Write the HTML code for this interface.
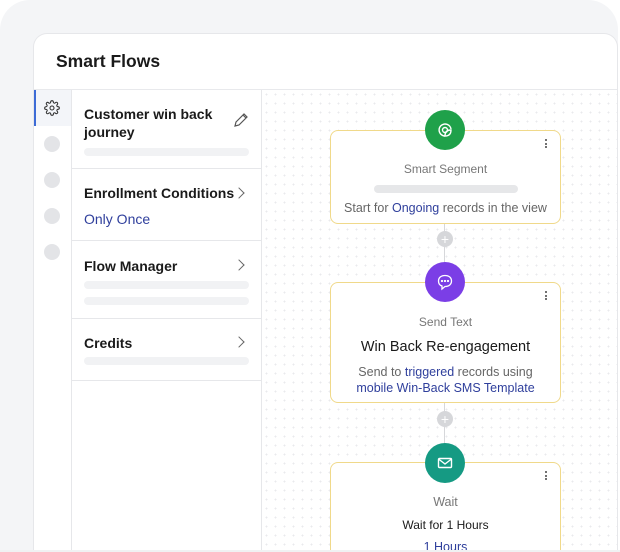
<!DOCTYPE html>
<html style="width:620px;height:552px;overflow:hidden"><head><meta charset="utf-8"><style>
*{margin:0;padding:0;box-sizing:border-box}
body{width:620px;height:552px;background:#fff;font-family:"Liberation Sans",sans-serif;position:relative;overflow:hidden}
.abs{position:absolute}
.bg{left:0;top:0;width:618px;height:552px;background:#f4f5f7;border-radius:30px 30px 0 0}
.card{left:33px;top:33px;width:585px;height:519px;background:#fff;border:1px solid #e6e7ea;border-bottom:none;border-radius:14px 14px 0 0;overflow:hidden}
.title{left:22px;top:17px;font-size:17.5px;font-weight:bold;color:#1a1a1a}
.hline{left:0;top:55px;width:100%;height:1px;background:#e8e9ec}
.rail{left:0;top:56px;width:38px;height:463px;border-right:1px solid #e6e7ea}
.dot{width:16px;height:16px;border-radius:50%;background:#e3e4e7;left:10px}
.list{left:38px;top:56px;width:190px;height:463px;border-right:1px solid #e6e7ea}
.item{position:absolute;left:0;width:189px;border-bottom:1px solid #e6e7ea}
.h{position:absolute;left:12px;font-size:14px;font-weight:bold;color:#1a1a1a;line-height:18px}
.bar{position:absolute;left:12px;width:165px;height:8px;border-radius:4px;background:#f1f2f4}
.chev{position:absolute;right:18px;width:8px;height:8px;border-right:1.2px solid #666;border-top:1.2px solid #666;transform:rotate(45deg)}
.canvas{left:228px;top:56px;width:356px;height:463px;background-image:radial-gradient(#e9eaec 0.8px,transparent 1px);background-size:9px 9px}
.node{position:absolute;left:330px;width:231px;border:1.5px solid #f0d98a;border-radius:8px;background:#fff;text-align:center}
.circ{position:absolute;width:40px;height:40px;border-radius:50%;left:425px}
.plus{position:absolute;left:437px;width:16px;height:16px;border-radius:50%;background:#d6d7da;color:#fff;font-size:14px;line-height:16px;text-align:center}
.vl{position:absolute;left:444px;width:1px;background:#d6d7da}
.lab{color:#777;font-size:12px}
.blue{color:#2f3f9c}
.kebab{position:absolute;right:13px;top:8px;width:2px}
.kebab i{display:block;width:2px;height:2px;background:#444;border-radius:1px;margin-bottom:1.5px}
</style></head><body>
<div class="abs bg"></div>
<div class="abs card">
 <div class="abs title">Smart Flows</div>
 <div class="abs hline"></div>
 <div class="abs rail">
  <div class="abs" style="left:0;top:0;width:37px;height:36px;background:#f3f5f9;border-left:2px solid #3d6bd6"></div>
  <svg class="abs" style="left:10px;top:10px" width="16" height="16" viewBox="0 0 24 24" fill="none" stroke="#333" stroke-width="1.6"><circle cx="12" cy="12" r="3"/><path d="M19.4 15a1.7 1.7 0 0 0 .3 1.8l.1.1a2 2 0 1 1-2.8 2.8l-.1-.1a1.7 1.7 0 0 0-1.8-.3 1.7 1.7 0 0 0-1 1.5V21a2 2 0 1 1-4 0v-.1a1.7 1.7 0 0 0-1.1-1.5 1.7 1.7 0 0 0-1.8.3l-.1.1a2 2 0 1 1-2.8-2.8l.1-.1a1.7 1.7 0 0 0 .3-1.8 1.7 1.7 0 0 0-1.5-1H3a2 2 0 1 1 0-4h.1a1.7 1.7 0 0 0 1.5-1.1 1.7 1.7 0 0 0-.3-1.8l-.1-.1a2 2 0 1 1 2.8-2.8l.1.1a1.7 1.7 0 0 0 1.8.3H9a1.7 1.7 0 0 0 1-1.5V3a2 2 0 1 1 4 0v.1a1.7 1.7 0 0 0 1 1.5 1.7 1.7 0 0 0 1.8-.3l.1-.1a2 2 0 1 1 2.8 2.8l-.1.1a1.7 1.7 0 0 0-.3 1.8V9a1.7 1.7 0 0 0 1.5 1H21a2 2 0 1 1 0 4h-.1a1.7 1.7 0 0 0-1.5 1z"/></svg>
  <div class="abs dot" style="top:46px"></div>
  <div class="abs dot" style="top:82px"></div>
  <div class="abs dot" style="top:118px"></div>
  <div class="abs dot" style="top:154px"></div>
 </div>
 <div class="abs list">
  <div class="item" style="top:0;height:79px">
   <div class="h" style="top:15px">Customer win back<br>journey</div>
   <svg style="position:absolute;left:161px;top:22px" width="16" height="16" viewBox="0 0 16 16" fill="none" stroke="#555" stroke-width="1.2"><path d="M2 14l1-4 8-8 3 3-8 8z M10 3l3 3"/></svg>
   <div class="bar" style="top:58px"></div>
  </div>
  <div class="item" style="top:79px;height:72px">
   <div class="h" style="top:15px">Enrollment Conditions</div>
   <div class="chev" style="top:20px"></div>
   <div style="position:absolute;left:12px;top:42px;font-size:14px" class="blue">Only Once</div>
  </div>
  <div class="item" style="top:151px;height:78px">
   <div class="h" style="top:16px">Flow Manager</div>
   <div class="chev" style="top:20px"></div>
   <div class="bar" style="top:40px"></div>
   <div class="bar" style="top:56px"></div>
  </div>
  <div class="item" style="top:229px;height:62px">
   <div class="h" style="top:15px">Credits</div>
   <div class="chev" style="top:19px"></div>
   <div class="bar" style="top:38px"></div>
  </div>
 </div>
 <div class="abs canvas"></div>
</div>

<div class="vl" style="top:223px;height:59px"></div>
<div class="vl" style="top:402px;height:60px"></div>

<div class="node" style="top:130px;height:94px">
 <div class="kebab"><i></i><i></i><i></i></div>
 <div class="lab" style="margin-top:31px">Smart Segment</div>
 <div style="width:144px;height:8px;border-radius:4px;background:#e6e7e9;margin:9px auto 0"></div>
 <div style="font-size:12.5px;color:#666;margin-top:8px">Start for <span class="blue">Ongoing</span> records in the view</div>
</div>
<div class="circ" style="top:110px;background:#1fa14a"><svg style="margin:11px" width="18" height="18" viewBox="0 0 18 18" fill="none" stroke="#fff" stroke-width="1.4"><path d="M15 8a6 6 0 1 0-6 7"/><path d="M9 15c0-4 2-6 6-6 0 4-2 6-6 6z"/><circle cx="9" cy="9" r="2.5"/></svg></div>
<div class="plus" style="top:231px">+</div>

<div class="node" style="top:282px;height:121px">
 <div class="kebab"><i></i><i></i><i></i></div>
 <div class="lab" style="margin-top:32px">Send Text</div>
 <div style="font-size:14.5px;color:#1a1a1a;margin-top:10px">Win Back Re-engagement</div>
 <div style="font-size:12.5px;color:#666;margin-top:9px;line-height:16px">Send to <span class="blue">triggered</span> records using<br><span class="blue">mobile Win-Back SMS Template</span></div>
</div>
<div class="circ" style="top:262px;background:#7b3ee6"><svg style="margin:11px" width="18" height="18" viewBox="0 0 18 18" fill="none" stroke="#fff" stroke-width="1.3"><path d="M9 2.5c4 0 6.5 2.3 6.5 5.5S13 13.5 9 13.5l-3 2.5v-3C3.5 12.3 2.5 10.3 2.5 8 2.5 4.8 5 2.5 9 2.5z"/><circle cx="6" cy="8" r=".5" fill="#fff"/><circle cx="9" cy="8" r=".5" fill="#fff"/><circle cx="12" cy="8" r=".5" fill="#fff"/></svg></div>
<div class="plus" style="top:411px">+</div>

<div class="node" style="top:462px;height:90px;border-bottom:none;border-radius:8px 8px 0 0;overflow:hidden">
 <div class="kebab"><i></i><i></i><i></i></div>
 <div class="lab" style="margin-top:32px;font-size:12.5px">Wait</div>
 <div style="font-size:12px;color:#1a1a1a;margin-top:9px">Wait for 1 Hours</div>
 <div class="blue" style="font-size:12.5px;margin-top:8px;line-height:14px">1 Hours</div>
</div>
<div class="circ" style="top:443px;background:#159a83"><svg style="margin:12px" width="16" height="16" viewBox="0 0 16 16" fill="none" stroke="#fff" stroke-width="1.4"><rect x="1.5" y="3.5" width="13" height="9" rx="1"/><path d="M1.5 4l6.5 5 6.5-5"/></svg></div>
<div class="abs" style="left:0;top:550px;width:620px;height:2px;background:#f0f1f3"></div>
</body></html>
